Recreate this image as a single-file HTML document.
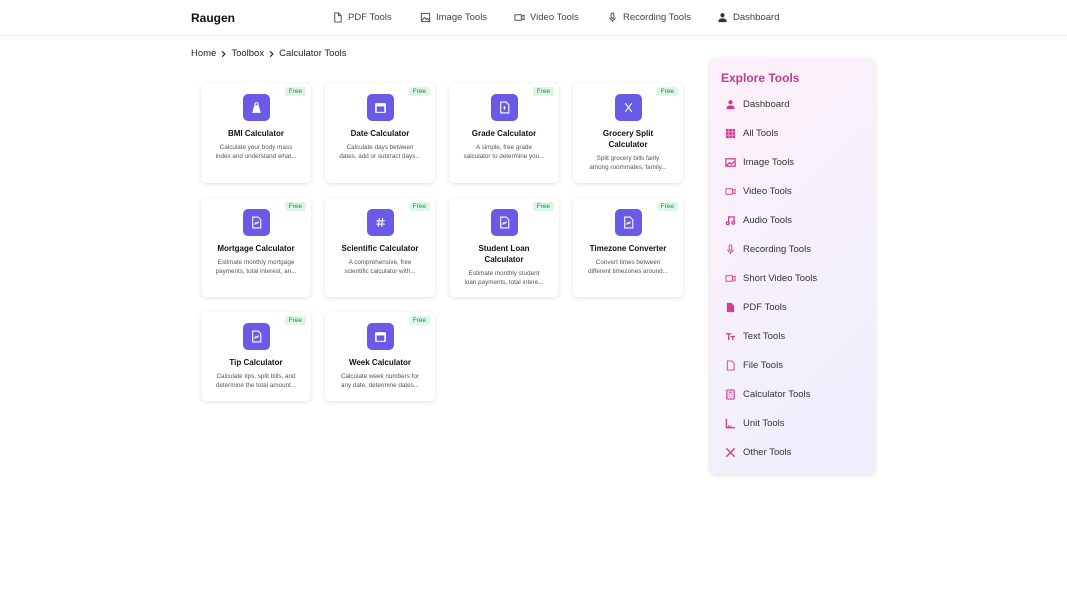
<!DOCTYPE html><html><head><meta charset="utf-8"><style>
*{box-sizing:border-box;margin:0;padding:0}
body{width:1067px;height:600px;background:#fff;font-family:"Liberation Sans",sans-serif;color:#111;position:relative;overflow:hidden}
.hdr{position:absolute;left:0;top:0;width:1067px;height:36px;border-bottom:1px solid #f0f0f0}
.logo{position:absolute;left:191px;top:11px;font-weight:bold;font-size:12px}
.nav{position:absolute;top:12px;font-size:9.5px;color:#444;display:flex;align-items:center;gap:5px}
.nav svg{width:11px;height:11px}
.bc{position:absolute;left:191px;top:47px;font-size:9.5px;color:#222;display:flex;gap:3px;align-items:center}
.bc svg{width:9px;height:10px}
.card{position:absolute;width:110px;background:#fff;border-radius:6px;box-shadow:0 1px 4px rgba(0,0,0,.13);text-align:center}
.ic{width:27px;height:27px;border-radius:5px;background:#6a5ae8;margin:11px auto 0;display:flex;align-items:center;justify-content:center}
.ic svg{width:13px;height:13px}
.free{position:absolute;right:5px;top:4px;background:#dcf7e6;color:#1c8a45;font-size:6.5px;padding:1px 4px;border-radius:2px}
.t{font-size:8px;font-weight:bold;margin-top:7px;padding:0 12px;line-height:11px}
.d{font-size:6.3px;color:#555;margin-top:4px;padding:0 14px;line-height:9px}
.side{position:absolute;left:710px;top:58px;width:165px;height:416px;border-radius:6px;background:linear-gradient(135deg,#fdf0fa,#f4f0fb 60%,#eeeefc);box-shadow:0 1px 5px rgba(0,0,0,.15)}
.side h3{position:absolute;left:11px;top:13px;font-size:12px;color:#c23b8f}
.it{position:absolute;left:15px;font-size:9.5px;color:#333;display:flex;align-items:center;gap:7px}
</style></head><body>
<div class="hdr"></div>
<div class="logo">Raugen</div>
<div class="nav" style="left:332px"><svg viewBox="0 0 12 12" fill="none" stroke="#444"><path d="M3 1h4l3 3v7H3z M7 1v3h3"/></svg>PDF Tools</div>
<div class="nav" style="left:420px"><svg viewBox="0 0 12 12" fill="none" stroke="#444"><rect x="1.5" y="1.5" width="9" height="9"/><path d="M2 9l3-3 2 2 1-1 2 2"/></svg>Image Tools</div>
<div class="nav" style="left:514px"><svg viewBox="0 0 12 12" fill="none" stroke="#444"><rect x="1" y="3" width="7" height="6"/><path d="M8 5l3-1.5v5L8 7"/></svg>Video Tools</div>
<div class="nav" style="left:607px"><svg viewBox="0 0 12 12" fill="none" stroke="#444"><rect x="4.5" y="1" width="3" height="6" rx="1.5"/><path d="M3 6a3 3 0 006 0M6 9v2"/></svg>Recording Tools</div>
<div class="nav" style="left:717px"><svg viewBox="0 0 12 12" fill="#333"><circle cx="6" cy="3.5" r="2.3"/><path d="M1.5 11c0-3 2-4 4.5-4s4.5 1 4.5 4z"/></svg>Dashboard</div>
<div class="bc" style="top:48px">Home <svg viewBox="0 0 10 10" fill="none" stroke="#222" stroke-width="1.3"><path d="M3.5 2l3 3-3 3"/></svg> Toolbox <svg viewBox="0 0 10 10" fill="none" stroke="#222" stroke-width="1.3"><path d="M3.5 2l3 3-3 3"/></svg> Calculator Tools</div>

<div class="card" style="left:201px;top:83px;height:100px"><div class="free">Free</div><div class="ic"><svg viewBox="0 0 12 12" fill="#fff"><path d="M4 4h4l2 7H2z"/><circle cx="6" cy="3" r="1.5" fill="none" stroke="#fff"/></svg></div><div class="t">BMI Calculator</div><div class="d">Calculate your body mass index and understand what...</div></div>
<div class="card" style="left:325px;top:83px;height:100px"><div class="free">Free</div><div class="ic"><svg viewBox="0 0 12 12" fill="#fff"><rect x="1" y="2" width="10" height="9" rx="1"/><rect x="2.5" y="5" width="7" height="5" fill="#6a5ae8"/></svg></div><div class="t">Date Calculator</div><div class="d">Calculate days between dates, add or subtract days...</div></div>
<div class="card" style="left:449px;top:83px;height:100px"><div class="free">Free</div><div class="ic"><svg viewBox="0 0 12 12" fill="none" stroke="#fff"><path d="M2.5 1h5l2.5 2.5V11h-7.5z"/><path d="M5 6h2M6 5v3"/></svg></div><div class="t">Grade Calculator</div><div class="d">A simple, free grade calculator to determine you...</div></div>
<div class="card" style="left:573px;top:83px;height:100px"><div class="free">Free</div><div class="ic"><svg viewBox="0 0 12 12" fill="none" stroke="#fff"><path d="M3 2l6 8M9 2l-6 8"/></svg></div><div class="t">Grocery Split Calculator</div><div class="d">Split grocery bills fairly among roommates, family...</div></div>

<div class="card" style="left:201px;top:198px;height:99px"><div class="free">Free</div><div class="ic"><svg viewBox="0 0 12 12" fill="none" stroke="#fff"><path d="M2.5 1h5l2.5 2.5V11h-7.5z"/><path d="M4 8l1.5-2 1 1L8 5"/></svg></div><div class="t">Mortgage Calculator</div><div class="d">Estimate monthly mortgage payments, total interest, an...</div></div>
<div class="card" style="left:325px;top:198px;height:99px"><div class="free">Free</div><div class="ic"><svg viewBox="0 0 12 12" fill="none" stroke="#fff"><path d="M2 4.5h8M2 7.5h8M5 2l-1 8M8 2l-1 8"/></svg></div><div class="t">Scientific Calculator</div><div class="d">A comprehensive, free scientific calculator with...</div></div>
<div class="card" style="left:449px;top:198px;height:99px"><div class="free">Free</div><div class="ic"><svg viewBox="0 0 12 12" fill="none" stroke="#fff"><path d="M2.5 1h5l2.5 2.5V11h-7.5z"/><path d="M4 8l1.5-2 1 1L8 5"/></svg></div><div class="t">Student Loan Calculator</div><div class="d">Estimate monthly student loan payments, total intere...</div></div>
<div class="card" style="left:573px;top:198px;height:99px"><div class="free">Free</div><div class="ic"><svg viewBox="0 0 12 12" fill="none" stroke="#fff"><path d="M2.5 1h5l2.5 2.5V11h-7.5z"/><path d="M4 8l1.5-2 1 1L8 5"/></svg></div><div class="t">Timezone Converter</div><div class="d">Convert times between different timezones around...</div></div>

<div class="card" style="left:201px;top:312px;height:89px"><div class="free">Free</div><div class="ic"><svg viewBox="0 0 12 12" fill="none" stroke="#fff"><path d="M2.5 1h5l2.5 2.5V11h-7.5z"/><path d="M4 8l1.5-2 1 1L8 5"/></svg></div><div class="t">Tip Calculator</div><div class="d">Calculate tips, split bills, and determine the total amount...</div></div>
<div class="card" style="left:325px;top:312px;height:89px"><div class="free">Free</div><div class="ic"><svg viewBox="0 0 12 12" fill="#fff"><rect x="1" y="2" width="10" height="9" rx="1"/><rect x="2.5" y="5" width="7" height="5" fill="#6a5ae8"/></svg></div><div class="t">Week Calculator</div><div class="d">Calculate week numbers for any date, determine dates...</div></div>

<div class="side"><h3>Explore Tools</h3>
<div class="it" style="top:41px"><svg width="11" height="11" viewBox="0 0 12 12" fill="#d23f8e"><circle cx="6" cy="3.5" r="2.3"/><path d="M1.5 11c0-3 2-4 4.5-4s4.5 1 4.5 4z"/></svg>Dashboard</div>
<div class="it" style="top:70px"><svg width="11" height="11" viewBox="0 0 12 12" fill="#d23f8e"><rect x="1" y="1" width="3" height="3"/><rect x="4.5" y="1" width="3" height="3"/><rect x="8" y="1" width="3" height="3"/><rect x="1" y="4.5" width="3" height="3"/><rect x="4.5" y="4.5" width="3" height="3"/><rect x="8" y="4.5" width="3" height="3"/><rect x="1" y="8" width="3" height="3"/><rect x="4.5" y="8" width="3" height="3"/><rect x="8" y="8" width="3" height="3"/></svg>All Tools</div>
<div class="it" style="top:99px"><svg width="11" height="11" viewBox="0 0 12 12" fill="none" stroke="#d23f8e" stroke-width="1.4"><rect x="1" y="2" width="10" height="8"/><path d="M2 9l3-3 2 2 3-3"/></svg>Image Tools</div>
<div class="it" style="top:128px"><svg width="11" height="11" viewBox="0 0 12 12" fill="none" stroke="#d23f8e"><rect x="1" y="3" width="7" height="6"/><path d="M8 5l3-1.5v5L8 7"/></svg>Video Tools</div>
<div class="it" style="top:157px"><svg width="11" height="11" viewBox="0 0 12 12" fill="none" stroke="#d23f8e" stroke-width="1.4"><path d="M4 9V2h6v6"/><circle cx="3" cy="9" r="1.5"/><circle cx="9" cy="8.5" r="1.5"/></svg>Audio Tools</div>
<div class="it" style="top:186px"><svg width="11" height="11" viewBox="0 0 12 12" fill="none" stroke="#d23f8e"><rect x="4.5" y="1" width="3" height="6" rx="1.5"/><path d="M3 6a3 3 0 006 0M6 9v2"/></svg>Recording Tools</div>
<div class="it" style="top:215px"><svg width="11" height="11" viewBox="0 0 12 12" fill="none" stroke="#d23f8e"><rect x="1" y="3" width="7" height="6"/><path d="M8 5l3-1.5v5L8 7"/></svg>Short Video Tools</div>
<div class="it" style="top:244px"><svg width="11" height="11" viewBox="0 0 12 12" fill="#d23f8e"><path d="M2 1h5l3 3v7H2z"/></svg>PDF Tools</div>
<div class="it" style="top:273px"><svg width="11" height="11" viewBox="0 0 12 12" fill="none" stroke="#d23f8e" stroke-width="1.4"><path d="M1 3h6M4 3v7M6 6h5M8.5 6v4"/></svg>Text Tools</div>
<div class="it" style="top:302px"><svg width="11" height="11" viewBox="0 0 12 12" fill="none" stroke="#d23f8e"><path d="M2.5 1h5l2.5 2.5V11h-7.5z"/></svg>File Tools</div>
<div class="it" style="top:331px"><svg width="11" height="11" viewBox="0 0 12 12" fill="none" stroke="#d23f8e" stroke-width="1.3"><rect x="2" y="1" width="8" height="10" rx="1"/><path d="M4 3.5h4M4 6h1M7 6h1M4 8.5h1M7 8.5h1"/></svg>Calculator Tools</div>
<div class="it" style="top:360px"><svg width="11" height="11" viewBox="0 0 12 12" fill="none" stroke="#d23f8e" stroke-width="1.5"><path d="M1.5 1v9.5H11M4 10V8M6.5 10V8.5"/></svg>Unit Tools</div>
<div class="it" style="top:389px"><svg width="11" height="11" viewBox="0 0 12 12" fill="none" stroke="#d23f8e" stroke-width="1.6"><path d="M1.5 1.5l9 9M10.5 1.5l-9 9"/></svg>Other Tools</div>
</div>
</body></html>
